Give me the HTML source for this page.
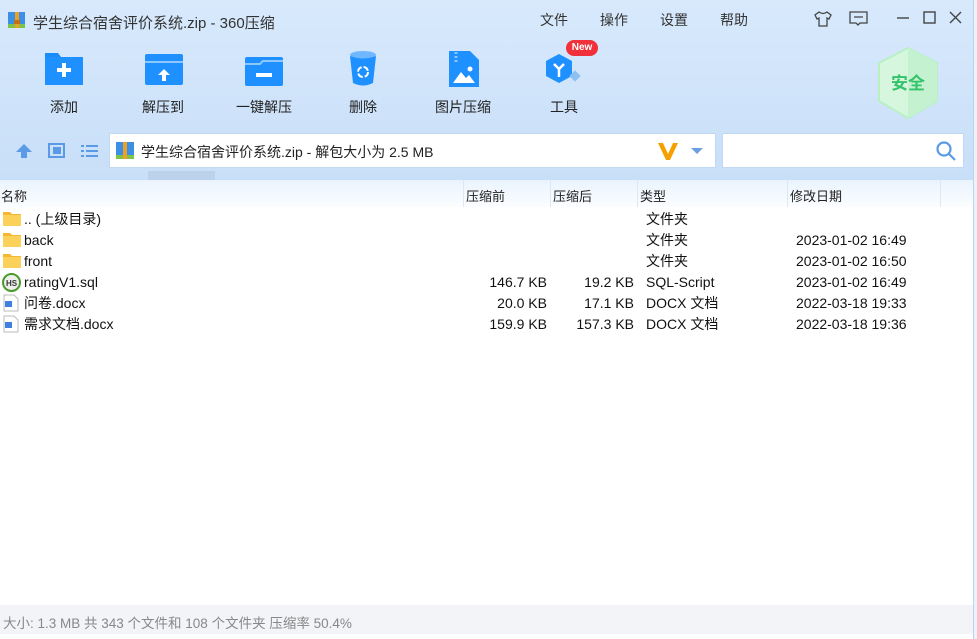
<!DOCTYPE html><html><head><meta charset="utf-8"><style>
*{margin:0;padding:0;box-sizing:border-box}
body{width:977px;height:639px;overflow:hidden;background:#fff;font-family:"Liberation Sans","Noto Sans CJK SC",sans-serif;position:relative}
.hdr{position:absolute;left:0;top:0;width:973px;height:180px;background:linear-gradient(#d8e9fc,#c8dff8)}
.t{position:absolute;white-space:nowrap}
.ic{position:absolute}
.lbl{position:absolute;font-size:14px;color:#222;width:100px;text-align:center;top:97px}
.row{position:absolute;left:0;height:21px;width:973px;font-size:14px;color:#111}
.row span{position:absolute;top:2px;white-space:nowrap;line-height:17px;height:17px}
.r{text-align:right}
</style></head><body>
<div class="hdr"></div>
<div style="position:absolute;left:973px;top:0;width:4px;height:639px;background:#eef2f7;border-left:1px solid #b8d4f3"></div>
<svg class="ic" style="left:8px;top:11px" width="18" height="18"><rect x="0" y="1" width="17" height="16" fill="#3b8fe6"/><rect x="0" y="13" width="17" height="4" fill="#7cc34a"/><rect x="7" y="1" width="4" height="16" fill="#f0a020"/><rect x="6" y="9" width="6" height="4" fill="#c07010"/></svg>
<div class="t" style="left:33px;top:12px;font-size:15px;color:#333">学生综合宿舍评价系统.zip - 360压缩</div>
<div class="t" style="left:540px;top:10px;font-size:14px;color:#333">文件</div>
<div class="t" style="left:600px;top:10px;font-size:14px;color:#333">操作</div>
<div class="t" style="left:660px;top:10px;font-size:14px;color:#333">设置</div>
<div class="t" style="left:720px;top:10px;font-size:14px;color:#333">帮助</div>
<svg class="ic" style="left:813px;top:10px" width="20" height="18" fill="none" stroke="#444" stroke-width="1.3"><path d="M6 2 L2 5 L4 9 L6 8 V16 H14 V8 L16 9 L18 5 L14 2 Q10 5 6 2Z"/></svg>
<svg class="ic" style="left:849px;top:11px" width="20" height="16" fill="none" stroke="#444" stroke-width="1.3"><path d="M1 1 H18 V12 H11 L9 14 L7 12 H1Z M5 6 H14"/></svg>
<svg class="ic" style="left:895px;top:10px" width="70" height="16" fill="none" stroke="#444" stroke-width="1.4"><path d="M2 8 H14"/><rect x="29" y="2" width="11" height="11"/><path d="M55 2 L66 13 M66 2 L55 13"/></svg>
<svg class="ic" style="left:44px;top:50px" width="40" height="36"><path d="M1 3 H14 L17 7 H39 V35 H1Z" fill="#1a8cf7"/><rect x="1" y="7" width="38" height="28" fill="#1e90ff"/><path d="M20 13 V27 M13 20 H27" stroke="#fff" stroke-width="4"/></svg>
<svg class="ic" style="left:144px;top:53px" width="40" height="33"><rect x="1" y="1" width="38" height="31" fill="#1e90ff" rx="2"/><path d="M1 9 H39" stroke="#8cc8ff" stroke-width="2"/><path d="M20 16 L14 22 H18 V28 H22 V22 H26Z" fill="#fff"/></svg>
<svg class="ic" style="left:244px;top:56px" width="40" height="30"><rect x="1" y="1" width="38" height="29" fill="#1e90ff" rx="2"/><path d="M1 8 H16 L19 5 H39" stroke="#8cc8ff" stroke-width="2" fill="none"/><rect x="12" y="17" width="16" height="4" fill="#fff"/></svg>
<svg class="ic" style="left:348px;top:50px" width="30" height="38"><ellipse cx="15" cy="5" rx="13" ry="4" fill="#6fb8ff"/><path d="M2 6 L5 33 Q15 38 25 33 L28 6 Q15 11 2 6Z" fill="#1e90ff"/><circle cx="15" cy="22" r="5" fill="none" stroke="#fff" stroke-width="2" stroke-dasharray="6 2"/></svg>
<svg class="ic" style="left:448px;top:50px" width="32" height="38"><path d="M1 1 H22 L31 10 V37 H1Z" fill="#1e90ff"/><path d="M8 2 V12" stroke="#8cc8ff" stroke-width="3" stroke-dasharray="2 2"/><path d="M5 33 L13 22 L18 28 L21 25 L27 33Z" fill="#fff"/><circle cx="22" cy="19" r="2.5" fill="#fff"/></svg>
<svg class="ic" style="left:545px;top:50px" width="38" height="36"><path d="M14 0 L27 7 V22 L14 29 L1 22 V7Z" fill="#1e90ff" transform="translate(0,4)"/><rect x="26" y="22" width="8" height="8" fill="#8cc0f0" transform="rotate(45 30 26)"/><path d="M9 14 L14 19 L19 14 M14 19 V27" stroke="#fff" stroke-width="2.5" fill="none"/></svg>
<div class="t" style="left:566px;top:40px;width:32px;height:16px;background:#f0303a;border-radius:8px;color:#fff;font-size:10px;text-align:center;line-height:16px;font-weight:bold">New</div>
<div class="lbl" style="left:14px">添加</div>
<div class="lbl" style="left:113px">解压到</div>
<div class="lbl" style="left:214px">一键解压</div>
<div class="lbl" style="left:313px">删除</div>
<div class="lbl" style="left:413px">图片压缩</div>
<div class="lbl" style="left:514px">工具</div>
<svg class="ic" style="left:876px;top:46px" width="64" height="74"><path d="M32 2 L61 17 V55 L32 72 L3 55 V17Z" fill="#d6f7de" stroke="#b8f0c4" stroke-width="2"/><path d="M32 2 L61 17 V55 L32 72Z" fill="#c4f2d0"/><text x="32" y="43" font-size="17" font-weight="bold" fill="#34c36a" text-anchor="middle" font-family="Noto Sans CJK SC">安全</text></svg>
<svg class="ic" style="left:14px;top:142px" width="90" height="18"><path d="M10 2 L2 10 H7 V16 H13 V10 H18Z" fill="#5b9ae6"/><rect x="35" y="2" width="15" height="13" fill="none" stroke="#5b9ae6" stroke-width="2"/><rect x="39" y="5" width="8" height="7" fill="#5b9ae6"/><g fill="#5b9ae6"><rect x="67" y="3" width="3" height="2"/><rect x="72" y="3" width="12" height="2"/><rect x="67" y="8" width="3" height="2"/><rect x="72" y="8" width="12" height="2"/><rect x="67" y="13" width="3" height="2"/><rect x="72" y="13" width="12" height="2"/></g></svg>
<div style="position:absolute;left:109px;top:133px;width:607px;height:35px;background:#fff;border:1px solid #c0d8f2"></div>
<svg class="ic" style="left:116px;top:140px" width="20" height="20"><rect x="0" y="2" width="18" height="17" fill="#3b8fe6"/><rect x="0" y="15" width="18" height="4" fill="#7cc34a"/><rect x="7" y="2" width="4" height="17" fill="#f0a020"/></svg>
<div class="t" style="left:141px;top:142px;font-size:14px;color:#222">学生综合宿舍评价系统.zip - 解包大小为 2.5 MB</div>
<svg class="ic" style="left:657px;top:141px" width="50" height="20"><path d="M1 2 H6 L11 13 L16 2 H21 L13 19 H9Z" fill="#f5a000"/><path d="M34 7 H46 L40 13Z" fill="#6a9fe0"/></svg>
<div style="position:absolute;left:722px;top:133px;width:242px;height:35px;background:#fff;border:1px solid #c0d8f2"></div>
<svg class="ic" style="left:935px;top:140px" width="22" height="22" fill="none" stroke="#5b9ae6" stroke-width="2.2"><circle cx="9" cy="9" r="6.5"/><path d="M14 14 L20 20"/></svg>
<div style="position:absolute;left:148px;top:171px;width:67px;height:9px;background:#bcd2ea"></div>
<div style="position:absolute;left:0;top:180px;width:973px;height:27px;background:linear-gradient(#eaf3fd,#fbfdff)"></div>
<div style="position:absolute;top:180px;left:463px;width:1px;height:27px;background:#dde8f4"></div>
<div style="position:absolute;top:180px;left:550px;width:1px;height:27px;background:#dde8f4"></div>
<div style="position:absolute;top:180px;left:637px;width:1px;height:27px;background:#dde8f4"></div>
<div style="position:absolute;top:180px;left:787px;width:1px;height:27px;background:#dde8f4"></div>
<div style="position:absolute;top:180px;left:940px;width:1px;height:27px;background:#dde8f4"></div>
<div class="t" style="left:1px;top:186px;font-size:13px;color:#222">名称</div>
<div class="t" style="left:466px;top:186px;font-size:13px;color:#222">压缩前</div>
<div class="t" style="left:553px;top:186px;font-size:13px;color:#222">压缩后</div>
<div class="t" style="left:640px;top:186px;font-size:13px;color:#222">类型</div>
<div class="t" style="left:790px;top:186px;font-size:13px;color:#222">修改日期</div>
<svg width="0" height="0" style="position:absolute"><defs>
<symbol id="fd" viewBox="0 0 20 16"><path d="M1 1 H8 L10 3 H19 V15 H1Z" fill="#f5b830"/><rect x="1" y="4" width="18" height="11" fill="#fcd15a"/></symbol>
<symbol id="dc" viewBox="0 0 16 18"><path d="M1 1 H11 L15 5 V17 H1Z" fill="#fff" stroke="#bbb"/><rect x="2" y="7" width="7" height="6" fill="#3f7fe0"/></symbol>
</defs></svg>
<div class="row" style="top:209px"><svg style="position:absolute;left:2px;top:2px" width="20" height="16"><use href="#fd"/></svg><span style="left:24px">.. (上级目录)</span><span style="left:646px">文件夹</span></div>
<div class="row" style="top:230px"><svg style="position:absolute;left:2px;top:2px" width="20" height="16"><use href="#fd"/></svg><span style="left:24px">back</span><span style="left:646px">文件夹</span><span style="left:796px">2023-01-02 16:49</span></div>
<div class="row" style="top:251px"><svg style="position:absolute;left:2px;top:2px" width="20" height="16"><use href="#fd"/></svg><span style="left:24px">front</span><span style="left:646px">文件夹</span><span style="left:796px">2023-01-02 16:50</span></div>
<div class="row" style="top:272px"><svg style="position:absolute;left:2px;top:1px" width="19" height="19"><circle cx="9.5" cy="9.5" r="8.5" fill="#eee" stroke="#4a9a2a" stroke-width="2"/><text x="9.5" y="13" font-size="8" font-weight="bold" text-anchor="middle" fill="#333">HS</text></svg><span style="left:24px">ratingV1.sql</span><span class="r" style="right:426px">146.7 KB</span><span class="r" style="right:339px">19.2 KB</span><span style="left:646px">SQL-Script</span><span style="left:796px">2023-01-02 16:49</span></div>
<div class="row" style="top:293px"><svg style="position:absolute;left:3px;top:1px" width="16" height="18"><use href="#dc"/></svg><span style="left:24px">问卷.docx</span><span class="r" style="right:426px">20.0 KB</span><span class="r" style="right:339px">17.1 KB</span><span style="left:646px">DOCX 文档</span><span style="left:796px">2022-03-18 19:33</span></div>
<div class="row" style="top:314px"><svg style="position:absolute;left:3px;top:1px" width="16" height="18"><use href="#dc"/></svg><span style="left:24px">需求文档.docx</span><span class="r" style="right:426px">159.9 KB</span><span class="r" style="right:339px">157.3 KB</span><span style="left:646px">DOCX 文档</span><span style="left:796px">2022-03-18 19:36</span></div>
<div style="position:absolute;left:0;top:605px;width:973px;height:29px;background:#f3f4f8"></div>
<div class="t" style="left:3px;top:612px;font-size:13.5px;color:#888">大小: 1.3 MB 共 343 个文件和 108 个文件夹 压缩率 50.4%</div>
</body></html>
